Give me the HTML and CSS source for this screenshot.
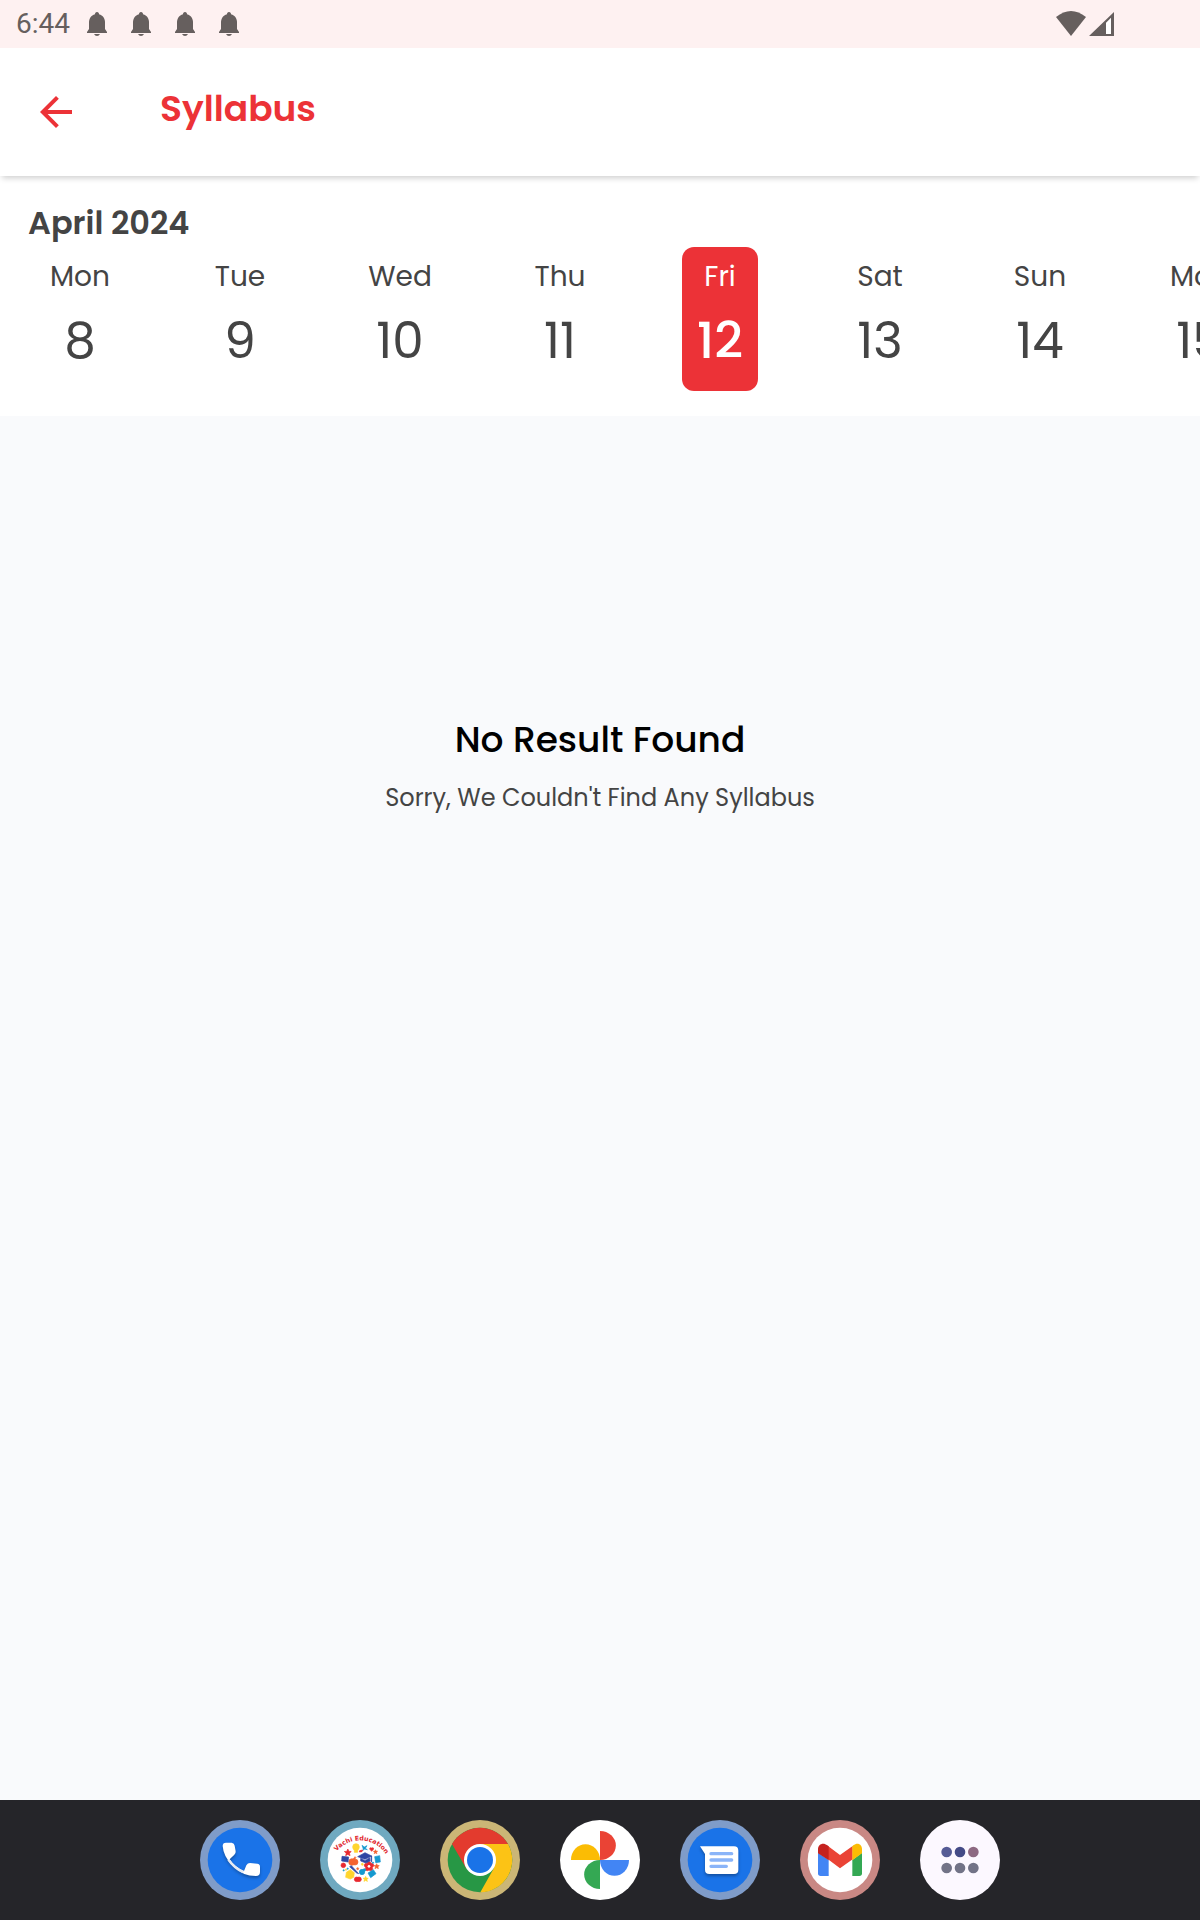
FILE: index.html
```html
<!DOCTYPE html>
<html lang="en">
<head>
    <meta charset="UTF-8">
    <meta name="viewport" content="width=device-width, initial-scale=1.0">
    <title>Syllabus</title>
    <link rel="stylesheet" href="styles.css">
</head>
<body>
    <svg class="defs" aria-hidden="true">
        <symbol id="bell" viewBox="0 0 20 24">
            <path d="M10 0c1.400 0 2 1 2 2.200C16 3 18 7 18 10v7l2 3v1H0v-1l2-3v-7C2 7 4 3 8 2.200 8 1 8.600 0 10 0zM7 22h6q-1 2-3 2t-3-2z"/>
        </symbol>
        <symbol id="star" viewBox="0 0 24 24">
            <path d="M12 1l3 7 8 1-6 5 2 8-7-4-7 4 2-8-6-5 8-1z"/>
        </symbol>
    </svg>

    <div class="status-bar">
        <span class="time">6:44</span>
        <div class="notifications">
            <svg><use href="#bell"/></svg>
            <svg><use href="#bell"/></svg>
            <svg><use href="#bell"/></svg>
            <svg><use href="#bell"/></svg>
        </div>
        <svg class="signal" viewBox="0 0 58 26">
            <path d="M0 6Q15-6 30 6L15 25z"/>
            <path fill-rule="evenodd" d="M33 25L58 1v24zM50 12v11h5V7z"/>
            <path class="signal-empty" d="M50 12v11h5V7z"/>
        </svg>
    </div>

    <header class="app-bar">
        <button class="back" aria-label="Back">
            <svg viewBox="0 0 24 24"><path d="M20 11H7.83l5.59-5.59L12 4l-8 8 8 8 1.41-1.41L7.83 13H20v-2z"/></svg>
        </button>
        <h1>Syllabus</h1>
    </header>

    <section class="calendar">
        <h2>April 2024</h2>
        <div class="days">
            <div class="day"><button><span>Mon</span><b>8</b></button></div>
            <div class="day"><button><span>Tue</span><b>9</b></button></div>
            <div class="day"><button><span>Wed</span><b>10</b></button></div>
            <div class="day"><button><span>Thu</span><b>11</b></button></div>
            <div class="day"><button class="selected"><span>Fri</span><b>12</b></button></div>
            <div class="day"><button><span>Sat</span><b>13</b></button></div>
            <div class="day"><button><span>Sun</span><b>14</b></button></div>
            <div class="day"><button><span>Mon</span><b>15</b></button></div>
        </div>
    </section>

    <main class="empty">
        <h3>No Result Found</h3>
        <p>Sorry, We Couldn't Find Any Syllabus</p>
    </main>

    <nav class="dock">
        <a href="#" aria-label="Phone">
            <svg viewBox="0 0 240 240">
                <circle cx="120" cy="120" r="120" fill="#7f9cc9"/>
                <circle cx="120" cy="120" r="97" fill="#1a73e8"/>
                <path class="drop" fill="#fff" d="M78 68H95Q103 69 104 77L107 94Q108 100 103 104L89 118Q105 142 132 153L139 136Q143 129 150 129L172 131Q180 132 180 140V156Q180 168 168 168Q128 168 98 138Q70 109 68 78Q68 68 78 68z"/>
                <path fill="#e4e9f2" d="M89 118Q105 142 132 153L128 160Q101 148 82 121z"/>
            </svg>
        </a>
        <a href="#" aria-label="Vachi Education">
            <svg class="logo" viewBox="0 0 240 240">
                <circle cx="120" cy="120" r="120" fill="#6fa9c0"/>
                <circle cx="120" cy="120" r="97" fill="#fff"/>
                <path id="arc" fill="none" d="M50 94A92 92 0 0 1 197 102"/>
                <text><textPath href="#arc">Vachi Education</textPath></text>
                <g fill="#e8292f" stroke="#e8292f">
                    <use href="#star" x="72" y="86" width="23" height="23"/>
                    <path d="M155 94l-6-7q0-6 6-3q6-3 6 3z"/>
                    <circle cx="70" cy="136" r="7"/>
                    <circle cx="139" cy="136" r="6"/><circle cx="147" cy="131" r="6"/><circle cx="155" cy="136" r="6"/>
                    <circle cx="152" cy="146" r="6"/><circle cx="142" cy="146" r="6"/>
                    <circle cx="110" cy="178" r="7"/><circle cx="117" cy="178" r="7"/>
                    <path d="M119 92l9-2-2 5-8 1z"/>
                </g>
                <g fill="#f4632f" stroke="#f4632f">
                    <circle cx="96" cy="126" r="10"/><circle cx="105" cy="126" r="9"/>
                    <path d="M99 118l6-8 3 3-6 6z"/>
                    <use href="#star" x="159" y="88" width="15" height="15"/>
                    <use href="#star" x="161" y="130" width="18" height="18"/>
                    <circle cx="113" cy="146" r="3"/>
                </g>
                <g fill="#ffd52e" stroke="#ffd52e">
                    <circle cx="108" cy="81" r="10"/><path d="M103 88h10v9h-10z"/>
                    <path d="M79 157l12-8 12 9-2 14-10 5-14-5z"/>
                    <use href="#star" x="128" y="168" width="18" height="18"/>
                    <circle cx="127" cy="133" r="3"/><circle cx="78" cy="149" r="2"/>
                </g>
                <g fill="#2f46a3" stroke="#2f46a3">
                    <path d="M66 109l20 2-2 15-19-3z"/>
                    <path d="M113 110l22-12 20 10-20 10zM122 115l13 7 14-9 1 10-12 6-16-6zM153 108h2v17h-2z"/>
                    <path d="M89 140l5-3 22 24-6-2z"/>
                </g>
                <g fill="#1599cf" stroke="#1599cf">
                    <path d="M164 110l15-3 2 19-14 2z"/>
                    <path d="M144 159l16-10 8 12-16 12z"/>
                    <circle cx="126" cy="156" r="8"/><circle cx="133" cy="150" r="4"/>
                    <path d="M126 76l7 5 8-4-5 8 6 4-9-2-3 4-1-7z"/>
                    <circle cx="71" cy="151" r="2"/><circle cx="83" cy="146" r="2"/><circle cx="159" cy="128" r="2"/>
                </g>
                <circle cx="147" cy="139" r="4" fill="#fff"/>
            </svg>
        </a>
        <a href="#" aria-label="Chrome">
            <svg viewBox="0 0 240 240">
                <circle cx="120" cy="120" r="120" fill="#cbb676"/>
                <circle cx="120" cy="120" r="97" fill="#279745"/>
                <path fill="#fcc315" d="M120 72H204A97 97 0 0 1 121 217L162 144z"/>
                <path fill="#e33b2e" d="M36 72A97 97 0 0 1 204 72H120L78 144z"/>
                <circle cx="120" cy="120" r="48" fill="#fff"/>
                <circle cx="120" cy="120" r="39" fill="#1a73e8"/>
            </svg>
        </a>
        <a href="#" aria-label="Photos">
            <svg viewBox="0 0 240 240">
                <circle cx="120" cy="120" r="120" fill="#fff"/>
                <path fill="#ea4335" d="M120 33A47 43 0 0 1 120 120z"/>
                <path fill="#fbbc04" d="M33 120A43 47 0 0 1 120 120z"/>
                <path fill="#4285f4" d="M207 120A43 47 0 0 1 120 120z"/>
                <path fill="#34a853" d="M120 207A47 43 0 0 1 120 120z"/>
            </svg>
        </a>
        <a href="#" aria-label="Messages">
            <svg viewBox="0 0 240 240">
                <circle cx="120" cy="120" r="120" fill="#7f9cc9"/>
                <circle cx="120" cy="120" r="97" fill="#1a73e8"/>
                <path class="drop" fill="#fff" d="M60 79H162Q175 79 175 92V149Q175 162 162 162H88Q75 162 75 149V102z"/>
                <path stroke="#8ab4f8" stroke-width="10" stroke-linecap="round" d="M93 101h62M93 120h62M93 139h46"/>
            </svg>
        </a>
        <a href="#" aria-label="Gmail">
            <svg viewBox="0 0 240 240">
                <circle cx="120" cy="120" r="120" fill="#c98884"/>
                <circle cx="120" cy="120" r="97" fill="#fff"/>
                <path fill="#4285f4" d="M54 98L86 120V168H62Q54 168 54 160z"/>
                <path fill="#34a853" d="M186 98L157 120V168H178Q186 168 186 160z"/>
                <path fill="#ea4335" d="M84 78L120 105L158 78V118L120 145L84 118z"/>
                <path fill="#c5221f" d="M54 100V88C54 72 70 66 82 76L86 79V121z"/>
                <path fill="#fbbc04" d="M186 100V88C186 72 172 66 160 76L157 79V121z"/>
            </svg>
        </a>
        <a href="#" aria-label="All apps">
            <svg viewBox="0 0 240 240">
                <circle cx="120" cy="120" r="120" fill="#fcf8ff"/>
                <circle cx="80" cy="96" r="16" fill="#555b95"/>
                <circle cx="120" cy="96" r="16" fill="#444b87"/>
                <circle cx="160" cy="96" r="16" fill="#8d6982"/>
                <g fill="#727387"><circle cx="80" cy="144" r="16"/><circle cx="120" cy="144" r="16"/><circle cx="160" cy="144" r="16"/></g>
            </svg>
        </a>
    </nav>
</body>
</html>
```

FILE: styles.css
```css
* {
    box-sizing: border-box;
}
body {
    margin: 0;
    min-height: 100vh;
    display: flex;
    flex-direction: column;
    background-color: #f9fafc;
    color: #444;
    font-family: Poppins, Inter, sans-serif;
}
h1, h2, h3, p {
    margin: 0;
}
button {
    border: 0;
    padding: 0;
    background: none;
    color: inherit;
    font-family: inherit;
    cursor: pointer;
}
svg {
    display: block;
}
.defs {
    display: none;
}

/* status bar */
.status-bar {
    display: flex;
    align-items: center;
    gap: 17px;
    height: 48px;
    padding: 0 86px 0 16px;
    background-color: #fef1f1;
    color: #665f5e;
    fill: #665f5e;
}
.time {
    font-family: Roboto, sans-serif;
    font-size: 28px;
    line-height: 48px;
}
.notifications {
    display: flex;
    gap: 24px;
}
.notifications svg {
    width: 20px;
    height: 24px;
}
.signal {
    width: 58px;
    height: 26px;
    margin-left: auto;
}
.signal-empty {
    fill: #fff;
}

/* app bar */
.app-bar {
    display: flex;
    align-items: center;
    gap: 80px;
    height: 128px;
    padding: 0 32px;
    background-color: #fff;
    color: #ec3237;
    position: relative;
    box-shadow: 0 4px 6px -2px rgba(0, 0, 0, 0.2);
}
.back svg {
    width: 48px;
    height: 48px;
    fill: #ec3237;
}
.app-bar h1 {
    padding-bottom: 6px;
    font-size: 36px;
    font-weight: 600;
    line-height: 48px;
}

/* calendar strip */
.calendar {
    padding: 23px 0 25px;
    background-color: #fff;
}
.calendar h2 {
    padding: 0 28px;
    font-size: 32px;
    font-weight: 600;
    line-height: 48px;
}
.days {
    display: flex;
    overflow: hidden;
}
.day {
    flex: 0 0 160px;
    display: flex;
    justify-content: center;
}
.day button {
    display: flex;
    flex-direction: column;
    align-items: center;
    gap: 14px;
    min-width: 76px;
    padding: 12px 0 18px;
    border-radius: 12px;
}
.day span {
    font-size: 28px;
    line-height: 36px;
}
.day b {
    font-size: 50px;
    font-weight: 400;
    line-height: 64px;
}
.day .selected {
    background-color: #ec3237;
    color: #fff;
}
.day .selected b {
    font-weight: 500;
}

/* empty state */
.empty {
    flex: 1;
    display: flex;
    flex-direction: column;
    align-items: center;
    gap: 18px;
    padding: 300px 24px 24px;
    text-align: center;
}
.empty h3 {
    color: #000;
    font-size: 36px;
    font-weight: 500;
    line-height: 48px;
}
.empty p {
    font-size: 24px;
    line-height: 32px;
}

/* dock */
.dock {
    display: flex;
    justify-content: center;
    gap: 40px;
    padding: 20px;
    background-color: #252529;
}
.dock svg {
    width: 80px;
    height: 80px;
}
.drop {
    filter: drop-shadow(0 6px 5px rgba(0, 0, 0, 0.3));
}
.logo g {
    stroke-width: 2px;
}
.logo text {
    fill: #e0242c;
    font-family: "DejaVu Sans", sans-serif;
    font-size: 19px;
    font-weight: bold;
}
```
